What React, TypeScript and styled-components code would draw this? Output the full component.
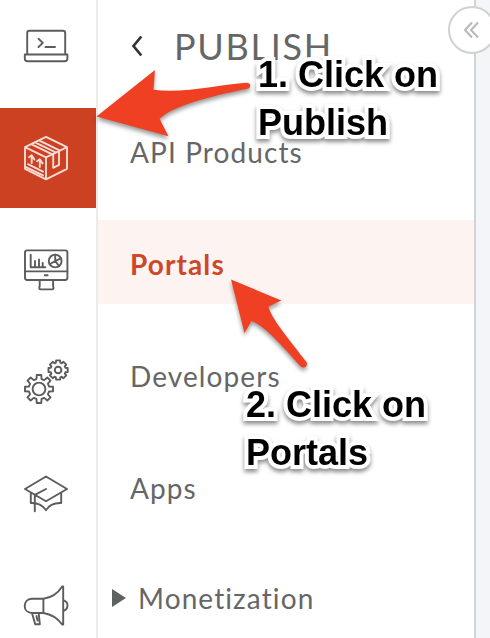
import React from 'react';
import styled, { createGlobalStyle } from 'styled-components';

const Global = createGlobalStyle`
  * { box-sizing: border-box; }
  body { margin: 0; background: #fff; overflow: hidden; }
`;

const Page = styled.div`
  position: relative;
  display: flex;
  width: 490px;
  height: 638px;
  overflow: hidden;
  background: #f4f5f8;
  font-family: Lato, sans-serif;
  color: #666;
`;

const Rail = styled.nav`
  display: flex;
  flex-direction: column;
  gap: 12px;
  flex: 0 0 98px;
  height: 638px;
  overflow: hidden;
  background: #fff;
  border-right: 2px solid #ebebeb;
`;

const RailButton = styled.a<{ $active?: boolean; $first?: boolean }>`
  display: flex;
  align-items: center;
  flex: 0 0 ${(p) => (p.$first ? 96 : 100)}px;
  padding: 0 0 ${(p) => (p.$first ? 4 : 0)}px 22px;
  background: ${(p) => (p.$active ? '#cc4122' : 'transparent')};
  color: ${(p) => (p.$active ? '#f8dcd5' : '#5c5c5c')};
`;

const Icon = styled.svg`
  display: block;
  width: 48px;
  height: 48px;
  fill: none;
  stroke: currentColor;
  stroke-width: 1.9;
  stroke-linejoin: round;
  stroke-linecap: round;
`;

const Panel = styled.section`
  flex: 0 0 378px;
  height: 638px;
  overflow: hidden;
  background: #fff;
  border-right: 2px solid #d2d3d4;
`;

const Header = styled.header`
  display: flex;
  align-items: center;
  height: 108px;
  padding: 0 0 16px 33px;
`;

const BackIcon = styled.svg`
  width: 12px;
  height: 22px;
  margin: 0 31px 0 0;
  fill: none;
  stroke: #333;
  stroke-width: 2.7;
`;

const Title = styled.h1`
  margin: 0;
  font-size: 36px;
  font-weight: 400;
  line-height: 44px;
  letter-spacing: 1.7px;
`;

const Menu = styled.div`
  display: flex;
  flex-direction: column;
  gap: 28px;
`;

const MenuItem = styled.a<{ $active?: boolean; $parent?: boolean }>`
  display: flex;
  align-items: center;
  flex: 0 0 84px;
  padding: ${(p) => (p.$parent ? 0 : 3)}px 0 0 ${(p) => (p.$parent ? 14 : 32)}px;
  font-size: 28px;
  line-height: 34px;
  letter-spacing: 1.1px;
  font-weight: ${(p) => (p.$active ? 700 : 400)};
  color: ${(p) => (p.$active ? '#cf4729' : '#666')};
  background: ${(p) => (p.$active ? '#fdf4f1' : 'transparent')};
`;

const Caret = styled.svg`
  width: 14px;
  height: 18px;
  margin-right: 12px;
  fill: #5f6262;
`;

const Collapse = styled.button`
  position: absolute;
  left: 448px;
  top: 6px;
  display: flex;
  align-items: center;
  width: 48px;
  height: 48px;
  padding: 0 0 0 13px;
  border: 2px solid #d0d1d1;
  border-radius: 50%;
  background: #fff;
`;

const CollapseIcon = styled.svg`
  width: 17px;
  height: 18px;
  fill: none;
  stroke: #b8b8b8;
  stroke-width: 2;
`;

const Arrows = styled.svg`
  position: absolute;
  inset: 0;
  width: 490px;
  height: 638px;
  fill: #ef4023;
  filter: drop-shadow(0 3px 2px rgba(0, 0, 0, 0.4));
`;

const Note = styled.p<{ $x: number; $y: number }>`
  position: absolute;
  left: ${(p) => p.$x}px;
  top: ${(p) => p.$y}px;
  margin: 0;
  font: 700 36px/48px 'Liberation Sans', sans-serif;
  color: #000;
  white-space: pre;
  paint-order: stroke fill;
  stroke-linejoin: round;
  -webkit-text-stroke: 8px #fff;
  filter: drop-shadow(0 3px 2px rgba(0, 0, 0, 0.45));
`;

const gear = (cx: number, cy: number, outer: number, inner: number, wide: number, narrow: number) => {
  const at = (r: number, a: number) => `${(cx + r * Math.cos(a)).toFixed(2)} ${(cy + r * Math.sin(a)).toFixed(2)}`;
  const points: string[] = [];
  for (let i = 0; i < 8; i++) {
    const a = (i * Math.PI) / 4;
    points.push(at(inner, a - wide), at(outer, a - narrow), at(outer, a + narrow), at(inner, a + wide));
  }
  return `M${points.join('L')}Z`;
};

const TerminalIcon = () => (
  <Icon viewBox="0 0 48 48">
    <path d="M5.2 32.5V11q0-2.2 2.2-2.2H41q2.2 0 2.2 2.2v21.5M2.8 32.5h42.6v4q0 2.7-2.7 2.7H5.5q-2.7 0-2.7-2.7zM16.5 16.8l4.3 4.1-4.3 4.1M23.5 25h9.5" />
  </Icon>
);

const PackageIcon = () => (
  <Icon viewBox="0 0 48 48">
    <path d="M24 2.8 45 13.2v21.6L24 45.3 3 34.8V13.2zM3 13.2 24 23.4l21-10.2M24 23.4v21.9M9.3 10.1l21 10.2M13 8.3l21 10.2M17 6.4l21 10.2M30.3 20.3l7.7-3.7" />
    <path d="M31.2 20v13.8l5.8-2.9V17.2M6 30.2l15 7.4M4.5 33.3 21 41.4" />
    <path d="M9.7 29v-7.4M7 23.2l2.7-2 2.7 4.4M17.8 33v-7.4M15 27.2l2.8-2 2.8 4.2" />
  </Icon>
);

const MonitorIcon = () => (
  <Icon viewBox="0 0 48 48">
    <rect x="3" y="4.4" width="42.4" height="29.6" rx="2.2" />
    <path d="M3 25.4h42.4M17.7 34v6.2q-1.2 3.2 1 3.2h11.4q2.2 0 1-3.2V34" />
    <path d="M8.7 8.7v12.5h14.6M13 21v-6M17 21v-7.5M20.7 21v-4" />
    <circle cx="33.2" cy="15" r="6.4" />
    <path d="M33.2 15V8.6M33.2 15l5.8-2.7M33.2 15l3.9 5.1M33.2 15l-5.5 3.3" />
    <path d="M22.8 29.2h2.8" />
  </Icon>
);

const GearsIcon = () => (
  <Icon viewBox="0 0 48 48">
    <path d={gear(17, 31, 14.2, 10.3, 0.25, 0.16)} />
    <circle cx="17" cy="31" r="6.4" />
    <path d={gear(36.1, 12, 9.8, 7.6, 0.3, 0.2)} />
    <circle cx="36.1" cy="12" r="3.3" />
  </Icon>
);

const GraduationIcon = () => (
  <Icon viewBox="0 0 48 48">
    <path d="M24 6.5 45 19 24 31.2 3 19zM24 19 12.8 24.9v16.3M8.8 22.7V33q10.3-.5 15.2 7.2 4.5-7.7 15.2-7.2V22.7" />
  </Icon>
);

const MegaphoneIcon = () => (
  <Icon viewBox="0 0 48 48">
    <path d="M21.4 16.8H9.7C.4 17.4.4 30.7 9.7 31h11.7zM21.4 16.8Q33.5 15 40.2 4.5h1v38h-1Q33.5 33 21.4 31M41.2 18.2q4.3 1.2 4.3 5.4t-4.3 5.4M10 31l3.2 11.2h4.6L16.7 31M14.5 34l1 4.5" />
  </Icon>
);

const railItems = [TerminalIcon, PackageIcon, MonitorIcon, GearsIcon, GraduationIcon, MegaphoneIcon];
const menuItems = ['API Products', 'Portals', 'Developers', 'Apps'];

export default function App() {
  return (
    <>
      <Global />
      <Page>
        <Rail>
          {railItems.map((Glyph, i) => (
            <RailButton key={i} $first={i === 0} $active={i === 1}>
              <Glyph />
            </RailButton>
          ))}
        </Rail>
        <Panel>
          <Header>
            <BackIcon viewBox="0 0 12 22">
              <path d="M10.3 1.5 2.5 11l7.8 9.5" />
            </BackIcon>
            <Title>PUBLISH</Title>
          </Header>
          <Menu>
            {menuItems.map((label) => (
              <MenuItem key={label} $active={label === 'Portals'}>
                {label}
              </MenuItem>
            ))}
            <MenuItem $parent>
              <Caret viewBox="0 0 14 18">
                <path d="M0 0 14 9 0 18z" />
              </Caret>
              Monetization
            </MenuItem>
          </Menu>
        </Panel>
        <Collapse aria-label="Collapse">
          <CollapseIcon viewBox="0 0 17 18">
            <path d="M9 1.5 2 9l7 7.5M15 1.5 8 9l7 7.5" />
          </CollapseIcon>
        </Collapse>
        <Arrows viewBox="0 0 490 638">
          <path d="M96.5 116.5 155 70 153.5 89.7C183 94 222 84 246.5 82.7Q250 82.7 250.3 85.5 250.3 88 247.5 88.7C222 94 174 104 159.5 118.8L168.5 136.2Z" />
          <path d="M231 279.5 281.3 300.5 268.5 306.5C270 317 291 342 306.8 362.5Q307.7 367.3 303.2 367.5 301.5 367.3 300 365.8C286 350 263 324 251.5 321L244.5 333Z" />
        </Arrows>
        <Note $x={258} $y={51}>{'1. Click on\nPublish'}</Note>
        <Note $x={246} $y={381}>{'2. Click on\nPortals'}</Note>
      </Page>
    </>
  );
}
